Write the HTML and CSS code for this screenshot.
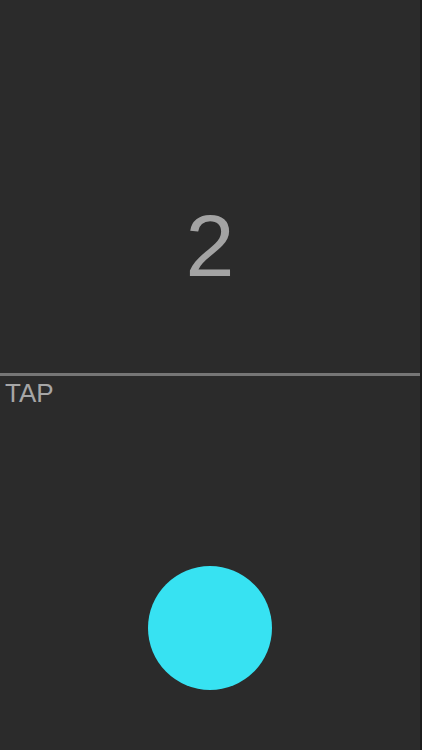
FILE: index.html
```html
<!DOCTYPE html>
<html>
<head>
<meta charset="utf-8">
<link rel="stylesheet" href="styles.css">
</head>
<body>
<div class="screen">
  <section class="top">
    <div class="count">2</div>
  </section>
  <div class="divider"></div>
  <section class="bottom">
    <div class="label">TAP</div>
    <div class="pad">
      <div class="ball"></div>
    </div>
  </section>
</div>
</body>
</html>
```
FILE: styles.css
```css
html, body {
  margin: 0;
  padding: 0;
  background: #2b2b2b;
}
.screen {
  width: 420px;
  height: 750px;
  border-right: 2px solid #1c1c1c;
  background: #2b2b2b;
  display: flex;
  flex-direction: column;
  font-family: "Liberation Sans", Arial, sans-serif;
}
.top {
  height: 373px;
  display: flex;
  justify-content: center;
  align-items: flex-start;
}
.count {
  margin-top: 196px;
  font-size: 88px;
  line-height: 100px;
  color: #a3a3a3;
}
.divider {
  height: 3px;
  background: #767676;
}
.bottom {
  flex: 1;
  display: flex;
  flex-direction: column;
}
.label {
  padding: 2px 0 0 5px;
  font-size: 26px;
  line-height: 30px;
  color: #a6a6a6;
}
.pad {
  display: flex;
  justify-content: center;
  padding-top: 158px;
}
.ball {
  width: 124px;
  height: 124px;
  border-radius: 50%;
  background: #37e2f2;
}
```
